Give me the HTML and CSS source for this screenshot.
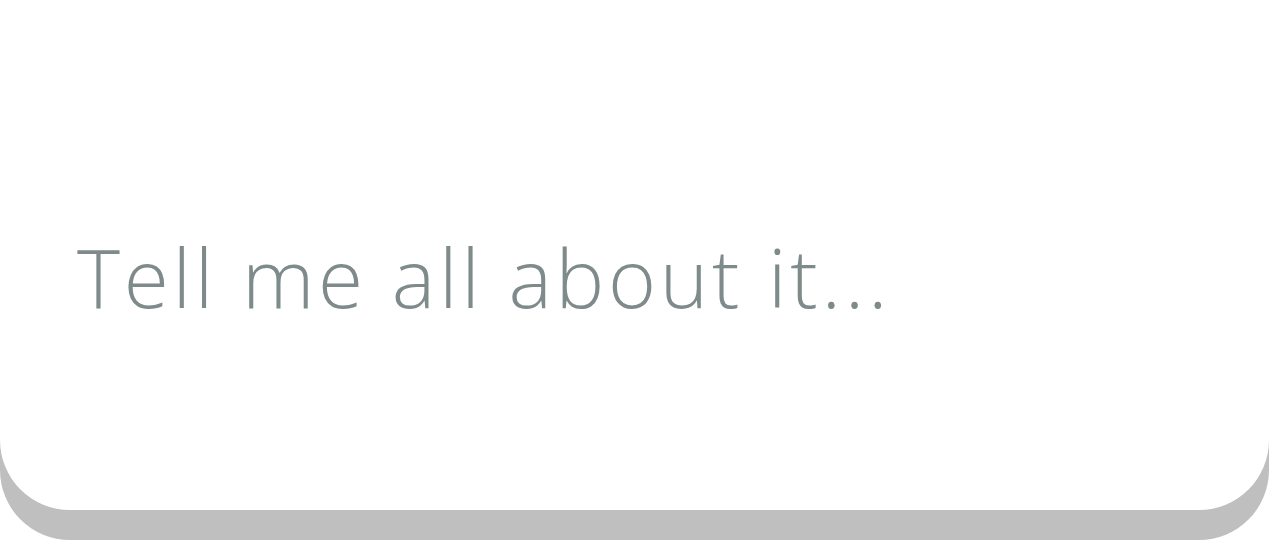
FILE: index.html
```html
<!DOCTYPE html>
<html>
<head>
<meta charset="utf-8">
<link rel="stylesheet" href="styles.css">
</head>
<body>
<div class="shadow">
  <div class="card">
    <div class="prompt">Tell me all about it...</div>
  </div>
</div>
</body>
</html>
```

FILE: styles.css
```css
html, body {
  margin: 0;
  padding: 0;
  background: #ffffff;
  overflow: hidden;
}
.shadow {
  width: 1269px;
  height: 540px;
  background: #bfbfbf;
  border-radius: 0 0 70px 70px;
}
.card {
  box-sizing: border-box;
  height: 510px;
  background: #ffffff;
  border-radius: 0 0 70px 70px;
  display: flex;
  align-items: flex-start;
  padding: 227px 0 0 77px;
}
.prompt {
  font-family: "Open Sans", sans-serif;
  font-weight: 350;
  font-size: 82px;
  line-height: 1.2;
  letter-spacing: 3.7px;
  color: #7f8b8b;
  white-space: nowrap;
}
```
